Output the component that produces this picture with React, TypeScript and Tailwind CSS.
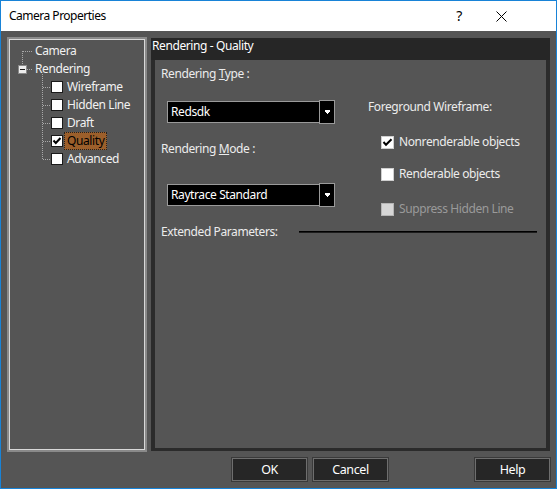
import React from "react";

function TreeBox({ checked }: { checked?: boolean }) {
  return (
    <div className="w-[12px] h-[12px] bg-white border border-[#1a1a1a] flex items-center justify-center shrink-0">
      {checked && (
        <svg width="10" height="10" viewBox="0 0 10 10">
          <polyline points="1.5,4.5 3.8,7 8.5,2" fill="none" stroke="#000" strokeWidth="2" />
        </svg>
      )}
    </div>
  );
}

function OptBox({ checked, disabled }: { checked?: boolean; disabled?: boolean }) {
  return (
    <div
      className={
        disabled
          ? "w-[13px] h-[13px] bg-[#d6d6d6] border border-[#b5b5b5] shrink-0"
          : "w-[13px] h-[13px] bg-white border border-[#cfcfcf] flex items-center justify-center shrink-0"
      }
    >
      {checked && (
        <svg width="11" height="11" viewBox="0 0 11 11">
          <polyline points="1.5,5 4,7.8 9.5,2.2" fill="none" stroke="#000" strokeWidth="2" />
        </svg>
      )}
    </div>
  );
}

function Combo({ value }: { value: string }) {
  return (
    <div className="flex w-[168px] h-[24px] items-center">
      <div className="flex-1 h-[22px] bg-black border border-[#9a9a9a] border-r-0 flex items-center pl-[3px] text-white">
        {value}
      </div>
      <div className="w-[16px] h-[24px] bg-black border border-[#9a9a9a] flex items-center justify-center">
        <svg width="5" height="4" viewBox="0 0 5 4" shapeRendering="crispEdges">
          <rect x="0" y="0" width="5" height="2" fill="#fff" />
          <rect x="1" y="2" width="3" height="1" fill="#fff" />
          <rect x="2" y="3" width="1" height="1" fill="#fff" />
        </svg>
      </div>
    </div>
  );
}

function Btn({ label, className }: { label: string; className?: string }) {
  return (
    <div
      className={
        "w-[75px] h-[23px] bg-[#262626] border border-[#6e6e6e] outline outline-1 outline-[#3a3a3a] flex items-center justify-center text-white text-[12.5px] " +
        (className ?? "")
      }
    >
      {label}
    </div>
  );
}

export default function App() {
  const children = ["Wireframe", "Hidden Line", "Draft", "Quality", "Advanced"];
  return (
    <div className="w-[557px] h-[489px] border border-[#1883d7] flex flex-col font-['Noto_Sans',sans-serif] text-[12px] leading-[16px] tracking-[-0.4px] overflow-hidden">
      {/* Title bar */}
      <div className="h-[30px] bg-white flex items-center shrink-0">
        <div className="pl-[8px] text-black text-[12px] tracking-[-0.5px]">Camera Properties</div>
        <div className="ml-auto w-[30px] text-center text-black text-[14px] mr-[12px]">?</div>
        <div className="w-[30px] flex items-center justify-center mr-[40px]">
          <svg width="11" height="11" viewBox="0 0 11 11">
            <line x1="0.5" y1="0.5" x2="10.5" y2="10.5" stroke="#000" strokeWidth="1" />
            <line x1="10.5" y1="0.5" x2="0.5" y2="10.5" stroke="#000" strokeWidth="1" />
          </svg>
        </div>
      </div>

      {/* Body */}
      <div className="flex-1 bg-[#555555] flex flex-col pl-[6px] pt-[6px]">
        <div className="flex items-start gap-[4px]">
          {/* Tree panel */}
          <div className="w-[140px] h-[415px] border-2 border-[#8a8a8a]">
            <div className="w-full h-full border border-[#d8d8d8] relative pt-[2px] text-[#f2f2f2]">
              <svg className="absolute left-0 top-0" width="60" height="130" shapeRendering="crispEdges">
                <g stroke="#a8a8a8" strokeWidth="1" strokeDasharray="1 1" fill="none">
                  <line x1="12.5" y1="11" x2="12.5" y2="25" />
                  <line x1="13" y1="11.5" x2="23" y2="11.5" />
                  <line x1="17" y1="29.5" x2="23" y2="29.5" />
                  <line x1="32.5" y1="34" x2="32.5" y2="120" />
                  <line x1="33" y1="47.5" x2="41" y2="47.5" />
                  <line x1="33" y1="65.5" x2="41" y2="65.5" />
                  <line x1="33" y1="83.5" x2="41" y2="83.5" />
                  <line x1="33" y1="101.5" x2="41" y2="101.5" />
                  <line x1="33" y1="119.5" x2="41" y2="119.5" />
                </g>
                <rect x="8.5" y="25.5" width="8" height="8" fill="#ededed" stroke="#8a8a8a" />
                <line x1="10" y1="29.5" x2="15" y2="29.5" stroke="#1a1a1a" />
              </svg>
              <div className="h-[18px] flex items-center pl-[25px]">Camera</div>
              <div className="h-[18px] flex items-center pl-[25px]">Rendering</div>
              {children.map((c) => (
                <div key={c} className="h-[18px] flex items-center pl-[41px]">
                  <TreeBox checked={c === "Quality"} />
                  {c === "Quality" ? (
                    <div className="ml-[1px] h-[18px] flex items-center px-[2px] bg-[#9c5f2b] border border-dotted border-[#222] text-black">
                      {c}
                    </div>
                  ) : (
                    <div className="ml-[4px]">{c}</div>
                  )}
                </div>
              ))}
            </div>
          </div>

          {/* Right frame */}
          <div className="mt-[1px] w-[399px] h-[413px] bg-[#2b2b2b] flex flex-col">
            <div className="h-[22px] bg-[#262626] pl-[1px] text-white shrink-0">Rendering - Quality</div>
            <div className="flex-1 mx-[4px] mb-[3px] bg-[#555555] flex flex-col text-[#ececec]">
              <div className="flex h-[158px]">
                <div className="w-[213px] pl-[6px] pt-[6px] flex flex-col">
                  <div>
                    Rendering <span className="underline">T</span>ype :
                  </div>
                  <div className="mt-[18px] ml-[6px]">
                    <Combo value="Redsdk" />
                  </div>
                  <div className="mt-[17px]">
                    Rendering <span className="underline">M</span>ode :
                  </div>
                  <div className="mt-[26px] ml-[6px]">
                    <Combo value="Raytrace Standard" />
                  </div>
                </div>
                <div className="flex-1 pt-[39px] flex flex-col">
                  <div>Foreground Wireframe:</div>
                  <div className="mt-[19px] ml-[13px] h-[16px] flex items-center gap-[5px]">
                    <OptBox checked />
                    <span>Nonrenderable objects</span>
                  </div>
                  <div className="mt-[16px] ml-[13px] h-[16px] flex items-center gap-[5px]">
                    <OptBox />
                    <span>Renderable objects</span>
                  </div>
                  <div className="mt-[19px] ml-[13px] h-[16px] flex items-center gap-[5px] text-[#9a9a9a]">
                    <OptBox disabled />
                    <span>Suppress Hidden Line</span>
                  </div>
                </div>
              </div>
              <div className="mt-[6px] pl-[6px] flex items-center h-[16px]">
                <span>Extended Parameters:</span>
                <div className="ml-auto mr-[9px] w-[238px] h-[2px] bg-black border-b border-[#1c1c1c]" />
              </div>
            </div>
          </div>
        </div>

        {/* Buttons */}
        <div className="mt-[6px] flex">
          <Btn label="OK" className="ml-[225px]" />
          <Btn label="Cancel" className="ml-[6px]" />
          <Btn label="Help" className="ml-[87px]" />
        </div>
      </div>
    </div>
  );
}
